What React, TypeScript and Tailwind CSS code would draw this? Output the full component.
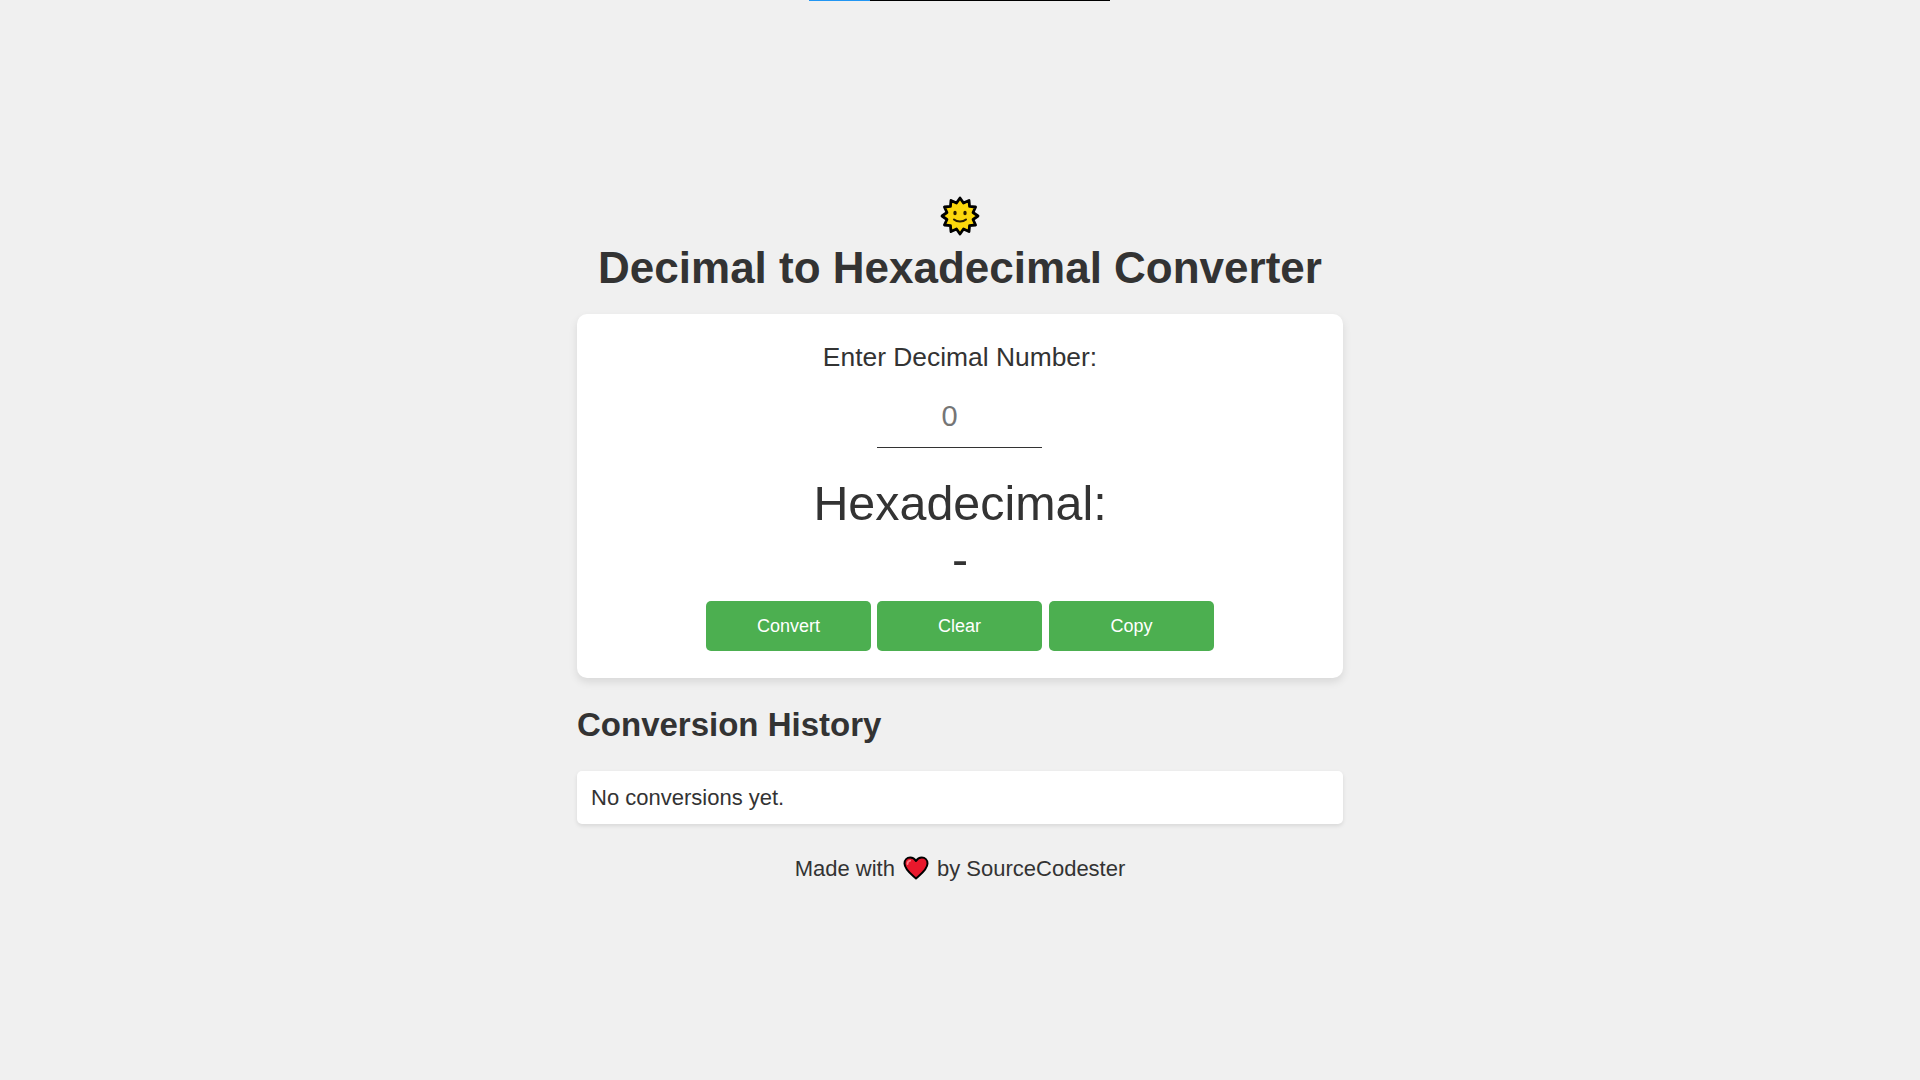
function Sun() {
  const points = Array.from({ length: 24 }, (_, i) => {
    const r = i % 2 === 0 ? 18 : 13.5;
    const a = (i * Math.PI) / 12;
    return `${20 + r * Math.sin(a)},${20 - r * Math.cos(a)}`;
  }).join(" ");
  return (
    <svg width="40" height="40" viewBox="0 0 40 40">
      <polygon points={points} fill="#fcd80c" stroke="#000" strokeWidth="2.800" strokeLinejoin="round" />
      <ellipse cx="15" cy="17" rx="1.700" ry="2.200" fill="#2a1e00" />
      <ellipse cx="25" cy="17" rx="1.700" ry="2.200" fill="#2a1e00" />
      <path d="M14 23.500c3 2.800 9 2.800 12 0" fill="none" stroke="#2a1e00" strokeWidth="2" strokeLinecap="round" />
    </svg>
  );
}

function Heart() {
  return (
    <svg width="26" height="24" viewBox="0 0 26 24" className="ml-2 mr-2">
      <path d="M13 22.500C8.500 18.500 1.500 13.500 1.500 7.500 1.500 3.800 4 1.500 7.200 1.500c2.500 0 4.500 1.300 5.800 3.500 1.300-2.200 3.300-3.500 5.800-3.500 3.200 0 5.700 2.300 5.700 6 0 6-7 11-11.500 15z" fill="#e8182c" stroke="#000" strokeWidth="2" strokeLinejoin="round" />
      <path d="M4.500 8c0-1.800 1.200-3 2.700-3.300" fill="none" stroke="#ff7a86" strokeWidth="1.800" strokeLinecap="round" />
    </svg>
  );
}

export default function App() {
  return (
    <div className="min-h-[1080px] bg-[#f0f0f0] flex flex-col items-center text-[#333] font-['Liberation_Sans',Arial,sans-serif]">
      <div className="w-[301px] h-px bg-black flex -translate-x-px">
        <div className="w-[61px] h-px bg-[#2196f3]"></div>
      </div>
      <div className="mt-[195px]">
        <Sun />
      </div>
      <h1 className="text-[44px] leading-[49px] font-bold mt-[7px]">Decimal to Hexadecimal Converter</h1>
      <div className="w-[766px] h-[364px] mt-[22px] bg-white rounded-[10px] shadow-[0_4px_8px_rgba(0,0,0,0.1)] flex flex-col items-center pt-[28px]">
        <label className="text-[26.400px] leading-[30px]">Enter Decimal Number:</label>
        <input
          type="text"
          placeholder="0"
          className="w-[165px] h-[64px] mt-[12px] mr-px pt-[2px] text-[29px] text-[#333] placeholder:text-[#757575] text-center pr-5 border-b border-[#333] outline-none"
        />
        <div className="text-[48.400px] leading-[56px] mt-[27px]">Hexadecimal:</div>
        <div className="text-[48.400px] leading-[56px]">-</div>
        <div className="flex gap-[6px] mt-[14px]">
          <button className="w-[165px] h-[50px] bg-[#4caf50] text-white text-lg rounded-[5px]">Convert</button>
          <button className="w-[165px] h-[50px] bg-[#4caf50] text-white text-lg rounded-[5px]">Clear</button>
          <button className="w-[165px] h-[50px] ml-px bg-[#4caf50] text-white text-lg rounded-[5px]">Copy</button>
        </div>
      </div>
      <div className="w-[766px] mt-[27px]">
        <h2 className="text-[33px] leading-[39px] font-bold">Conversion History</h2>
        <div className="h-[53px] mt-[27px] px-[14px] flex items-center bg-white rounded-[5px] shadow-[0_2px_4px_rgba(0,0,0,0.1)] text-[22px]">
          No conversions yet.
        </div>
      </div>
      <div className="flex items-center text-[22px] mt-[30px] h-[28px]">
        Made with <Heart /> by SourceCodester
      </div>
    </div>
  );
}
